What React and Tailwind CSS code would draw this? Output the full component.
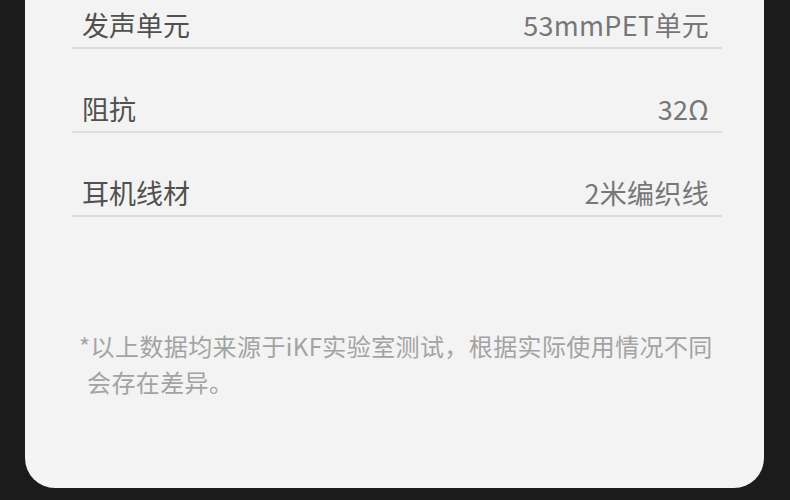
const SPECS = [
  { label: '发声单元', value: '53mmPET单元' },
  { label: '阻抗', value: '32Ω' },
  { label: '耳机线材', value: '2米编织线' },
];

export default function App() {
  return (
    <div
      className="w-[790px] h-[500px] bg-[#1b1b1b] overflow-hidden"
      style={{ fontFamily: '"Noto Sans CJK SC", "Noto Sans", sans-serif' }}
    >
      <div className="flow-root ml-[25px] w-[739px] h-[488px] bg-[#f3f3f3] rounded-b-[30px] pl-[47px] pr-[42px]">
        {/* Spec rows */}
        <div className="-mt-[35px]">
          {SPECS.map(row => (
            <div
              key={row.label}
              className="h-[84px] flex items-end justify-between border-b-2 border-[#dcdcdc] pl-[10px] pr-[13px] pb-[4px]"
            >
              <span className="text-[27px] leading-[36px] text-[#505050]">{row.label}</span>
              <span className="text-[27px] leading-[36px] tracking-[0.3px] text-[#777777]">{row.value}</span>
            </div>
          ))}
        </div>

        {/* Footnote */}
        <div className="mt-[111px] ml-[7px] text-[24px] leading-[36px] tracking-[0.4px] text-[#a3a3a3] whitespace-nowrap">
          <p>*以上数据均来源于iKF实验室测试，根据实际使用情况不同</p>
          <p className="pl-[8px]">会存在差异。</p>
        </div>
      </div>
    </div>
  );
}
